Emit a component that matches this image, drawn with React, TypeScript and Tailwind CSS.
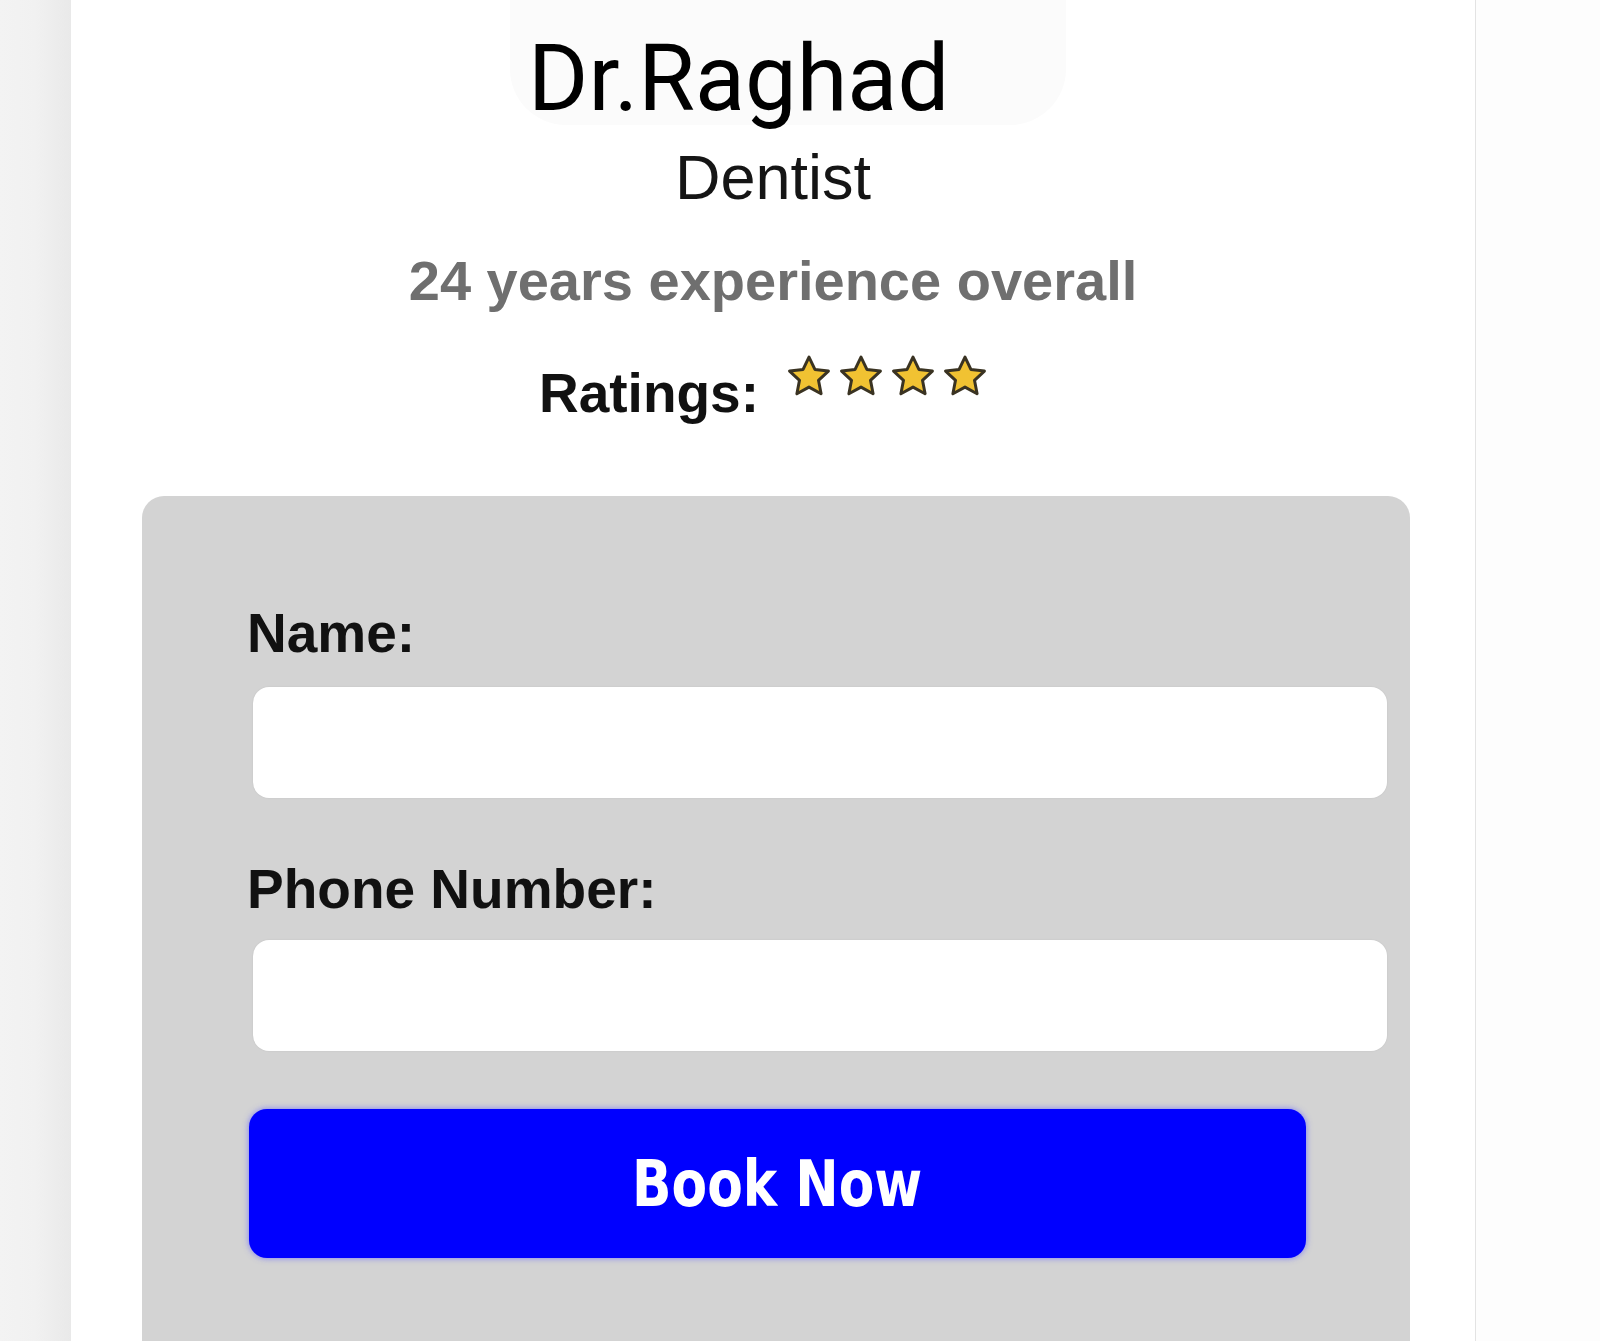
import React from 'react';

function Star() {
  return (
    <svg width="42" height="43" viewBox="1.5 1.4 21 20" className="block">
      <path
        d="M12 2.2l2.95 6.15 6.75.85-4.95 4.6 1.3 6.7L12 17.2l-6.05 3.3 1.3-6.7L2.3 9.2l6.75-.85z"
        fill="#f1c232"
        stroke="#3a3322"
        strokeWidth="1.5"
        strokeLinejoin="round"
      />
    </svg>
  );
}

function Field({ label, labelGap, inputTop }: { label: string; labelGap: number; inputTop: string }) {
  return (
    <div className={inputTop}>
      <label className="block font-['Liberation_Sans',Arial,sans-serif] text-[55px] font-bold leading-none text-[#111]">
        {label}
      </label>
      <input
        type="text"
        style={{ marginTop: labelGap }}
        className="ml-[6px] block h-[111px] w-[1134px] rounded-[16px] bg-white shadow-[0_0_2px_rgba(0,0,0,0.08)] outline-none"
      />
    </div>
  );
}

export default function App() {
  return (
    <div className="flex h-[1341px] w-full overflow-hidden bg-[#fdfdfd]">
      <div className="w-[71px] shrink-0 bg-gradient-to-r from-[#f3f3f3] via-[#f1f1f1] to-[#e9e9e9]" />

      <main className="flex w-[1405px] shrink-0 flex-col items-center border-r border-[#e3e3e3] bg-white">
        <div className="ml-[30px] h-[148px] w-[556px] rounded-b-[56px] bg-[#fbfbfb] pl-[18px] pt-[33px]">
          <h1 className="font-['Roboto','Noto_Sans',sans-serif] text-[92px] font-normal leading-none text-black">
            Dr.Raghad
          </h1>
        </div>

        <p className="mt-[21px] font-['Liberation_Sans',Arial,sans-serif] text-[63px] leading-none text-[#151515]">
          Dentist
        </p>

        <p className="mt-[44px] font-['Liberation_Sans',Arial,sans-serif] text-[56px] font-bold leading-none text-[#6f6f6f]">
          24 years experience overall
        </p>

        <div className="mr-[21px] mt-[57px] flex items-start">
          <span className="font-['Liberation_Sans',Arial,sans-serif] text-[55px] font-bold leading-none text-[#111]">
            Ratings:
          </span>
          <div className="-mt-[12px] ml-[29px] flex gap-[10px]">
            <Star />
            <Star />
            <Star />
            <Star />
          </div>
        </div>

        <form className="mt-[75px] ml-[71px] w-[1268px] self-start rounded-[22px] bg-[#d3d3d3] pb-[140px] pl-[105px] pr-[25px] pt-[110px]">
          <Field label="Name:" labelGap={26} inputTop="" />
          <Field label="Phone Number:" labelGap={23} inputTop="mt-[64px]" />
          <button
            type="button"
            className="ml-[2px] mt-[58px] flex h-[149px] w-[1057px] items-center justify-center rounded-[18px] bg-[#0000ff] shadow-[0_0_6px_rgba(100,100,255,0.8)] font-['Liberation_Sans_Narrow','DejaVu_Sans_Condensed','Liberation_Sans',sans-serif] font-bold leading-none text-white"
          >
            <span className="inline-block scale-x-[0.9] text-[64px]">Book Now</span>
          </button>
        </form>
      </main>
    </div>
  );
}
